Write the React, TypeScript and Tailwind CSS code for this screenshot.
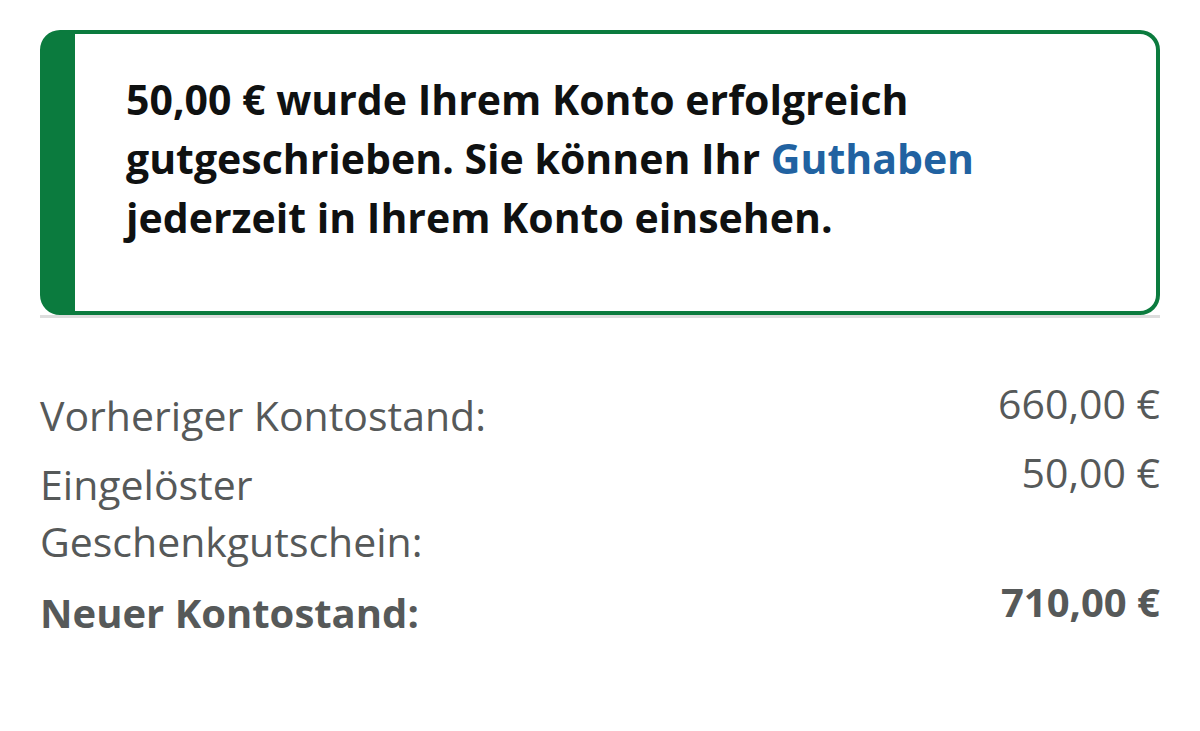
export default function App() {
  const rows = [
    { label: "Vorheriger Kontostand:", value: "660,00 €" },
    { label: "Eingelöster Geschenkgutschein:", value: "50,00 €" },
  ];

  return (
    <div className="min-h-[731px] w-[1200px] bg-white px-[40px] pt-[30px] font-['Open_Sans',sans-serif]">
      <div className="border-b-[3px] border-[#dddddd]">
        <div className="rounded-[20px] border-[4px] border-l-[35px] border-[#0b7b3e] pb-[64px] pl-[51px] pr-[40px] pt-[36px]">
          <p className="text-[41px] font-bold leading-[59px] text-[#0f1111]">
            50,00 € wurde Ihrem Konto erfolgreich gutgeschrieben. Sie können Ihr{" "}
            <span className="text-[#2162a1]">Guthaben</span> jederzeit in Ihrem Konto einsehen.
          </p>
        </div>
      </div>

      <div className="mt-[57px] flex flex-col text-[#565959]">
        {rows.map((r) => (
          <div key={r.label} className="flex justify-between">
            <span className="w-[470px] pt-[12px] text-[41px] leading-[57px]">{r.label}</span>
            <span className="text-[41px] leading-[57px]">{r.value}</span>
          </div>
        ))}
        <div className="flex justify-between font-bold">
          <span className="pt-[14px] text-[40px] leading-[57px]">Neuer Kontostand:</span>
          <span className="pt-[3px] text-[40px] leading-[57px]">710,00 €</span>
        </div>
      </div>
    </div>
  );
}
